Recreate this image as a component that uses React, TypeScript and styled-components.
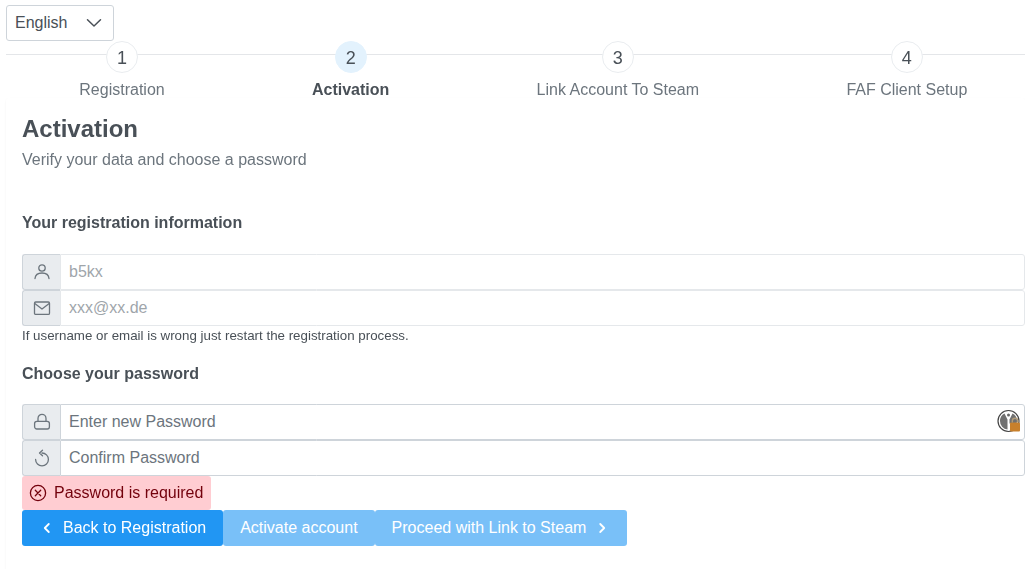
import React from "react";
import styled, { createGlobalStyle } from "styled-components";

const Global = createGlobalStyle`
  html, body { margin: 0; padding: 0; background: #fff; }
  body { font-family: "Liberation Sans", Arial, sans-serif; font-size: 16px; color: #495057; overflow: hidden; }
  * { box-sizing: border-box; }
`;

const Page = styled.div`
  width: 1025px;
  height: 569px;
  padding: 5px 0 0 6px;
  overflow: hidden;
  opacity: 0.999;
`;

const LangSelect = styled.div`
  width: 108px;
  height: 36px;
  border: 1px solid #ced4da;
  border-radius: 3px;
  padding: 0 11px 0 8px;
  display: flex;
  align-items: center;
  justify-content: space-between;
  color: #495057;
  background: #fff;
`;

const Steps = styled.ol`
  position: relative;
  list-style: none;
  margin: 0;
  padding: 0 0 0 73.3px;
  display: flex;
  align-items: flex-start;
  gap: 147.3px;
  height: 57px;
  &::before {
    content: "";
    position: absolute;
    left: 0;
    right: 0;
    top: 13px;
    height: 1px;
    background: #e4e6e9;
  }
`;

const Step = styled.li`
  position: relative;
  display: flex;
  flex-direction: column;
  align-items: center;
  white-space: nowrap;
`;

const StepNumber = styled.span<{ $active?: boolean }>`
  width: 32px;
  height: 32px;
  flex: none;
  border-radius: 50%;
  display: flex;
  align-items: center;
  justify-content: center;
  font-size: 18px;
  line-height: 18px;
  padding-top: 1px;
  color: #495057;
  background: ${(p) => (p.$active ? "#e3f2fd" : "#fff")};
  border: 1px solid ${(p) => (p.$active ? "#e3f2fd" : "#e9ecef")};
`;

const StepLabel = styled.span<{ $active?: boolean }>`
  margin-top: 8px;
  line-height: 18px;
  color: ${(p) => (p.$active ? "#495057" : "#6c757d")};
  font-weight: ${(p) => (p.$active ? 700 : 400)};
`;

const Card = styled.section`
  position: relative;
  height: 480px;
  padding: 16px 0 16px 16px;
  background: #fff;
  border-radius: 3px;
  box-shadow: 0 2px 1px -1px rgba(0, 0, 0, 0.06), 0 1px 1px 0 rgba(0, 0, 0, 0.04), 0 1px 3px 0 rgba(0, 0, 0, 0.06);
`;

const Title = styled.h1`
  margin: 0;
  font-size: 24px;
  line-height: 29px;
  font-weight: 700;
  color: #495057;
`;

const Subtitle = styled.p`
  margin: 8px 0 0;
  line-height: 18px;
  color: #6c757d;
`;

const SectionHeading = styled.h2<{ $top: number; $bottom: number }>`
  margin: ${(p) => p.$top}px 0 ${(p) => p.$bottom}px;
  font-size: 16px;
  line-height: 18px;
  font-weight: 700;
  color: #495057;
`;

const InputRow = styled.div`
  display: flex;
  height: 36px;
`;

const Addon = styled.span`
  width: 38px;
  flex: none;
  display: flex;
  align-items: center;
  justify-content: center;
  background: #e9ecef;
  color: #6c757d;
  border: 1px solid #ced4da;
  border-right: none;
  border-radius: 3px 0 0 3px;
`;

const Field = styled.div<{ $disabled?: boolean }>`
  flex: 1;
  position: relative;
  display: flex;
  align-items: center;
  padding: 0 8px;
  border: 1px solid #ced4da;
  border-radius: 0 3px 3px 0;
  background: #fff;
  color: #6c757d;
  ${(p) => (p.$disabled ? "opacity: 0.65; border-color: #d8dce0;" : "")}
`;

const Hint = styled.small`
  display: block;
  font-size: 13.33px;
  line-height: 15px;
  margin-top: 2px;
  color: #495057;
`;

const ErrorBox = styled.div`
  width: 189px;
  height: 34px;
  display: flex;
  align-items: center;
  gap: 7px;
  padding-left: 7px;
  border-radius: 3px;
  background: #ffcdd2;
  color: #73000c;
`;

const ButtonBar = styled.div`
  display: flex;
`;

const Button = styled.button<{ $disabled?: boolean }>`
  height: 36px;
  display: flex;
  align-items: center;
  gap: 8px;
  border: none;
  border-radius: 3px;
  margin: 0;
  padding: 0 17px;
  font: inherit;
  color: #fff;
  background: #2196f3;
  ${(p) => (p.$disabled ? "opacity: 0.6;" : "")}
`;

const PadlockBadge = styled.span`
  position: absolute;
  right: 3px;
  top: 4px;
  width: 24px;
  height: 24px;
  display: block;
`;

const Ico = ({ children, size = 18, sw = 1.3 }: { children: React.ReactNode; size?: number; sw?: number }) => (
  <svg width={size} height={size} viewBox="0 0 18 18" fill="none" stroke="currentColor" strokeWidth={sw} strokeLinecap="round" strokeLinejoin="round">
    {children}
  </svg>
);

export default function App() {
  return (
    <Page>
      <Global />
      <LangSelect>
        <span>English</span>
        <svg width="16" height="16" viewBox="0 0 16 16" fill="none" stroke="#495057" strokeWidth="1.5" strokeLinecap="round" strokeLinejoin="round">
          <path d="M1.5 4.8 8 11l6.5-6.2" />
        </svg>
      </LangSelect>
      <Steps>
        <Step><StepNumber>1</StepNumber><StepLabel>Registration</StepLabel></Step>
        <Step><StepNumber $active>2</StepNumber><StepLabel $active>Activation</StepLabel></Step>
        <Step><StepNumber>3</StepNumber><StepLabel>Link Account To Steam</StepLabel></Step>
        <Step><StepNumber>4</StepNumber><StepLabel>FAF Client Setup</StepLabel></Step>
      </Steps>
      <Card>
        <Title>Activation</Title>
        <Subtitle>Verify your data and choose a password</Subtitle>
        <SectionHeading $top={45} $bottom={22}>Your registration information</SectionHeading>
        <InputRow>
          <Addon>
            <Ico><circle cx="9" cy="5" r="3.2" /><path d="M2 15.5c.3-3.500 3-5.500 7-5.500s6.700 2 7 5.500" /></Ico>
          </Addon>
          <Field $disabled>b5kx</Field>
        </InputRow>
        <InputRow>
          <Addon>
            <Ico><rect x="1.500" y="3" width="15" height="12.400" rx="1.200" /><path d="M1.800 4.500 9 10l7.200-5.500" /></Ico>
          </Addon>
          <Field $disabled>xxx@xx.de</Field>
        </InputRow>
        <Hint>If username or email is wrong just restart the registration process.</Hint>
        <SectionHeading $top={22} $bottom={21}>Choose your password</SectionHeading>
        <InputRow>
          <Addon>
            <Ico><rect x="1.600" y="8.400" width="14.800" height="7.600" rx="2.200" /><path d="M5 8.400V5.400a4 4 0 0 1 8 0v3" /></Ico>
          </Addon>
          <Field>
            Enter new Password
            <PadlockBadge>
              <svg width="24" height="24" viewBox="0 0 24 24">
                <circle cx="11.500" cy="12" r="10.500" fill="#fff" stroke="#444" strokeWidth="1.200" />
                <path d="M3 12a8.500 8.500 0 0 1 4.500-7.500L10.500 10.500V20.500A8.500 8.500 0 0 1 3 12Z" fill="#707070" />
                <path d="M20 12a8.500 8.500 0 0 0-4.500-7.500L12.500 10.500v4h7a8.500 8.500 0 0 0 .5-2.500Z" fill="#707070" />
                <circle cx="11.500" cy="6" r="1.500" fill="#666" />
                <rect x="13" y="13.500" width="10" height="9" rx="1" fill="#c8802c" />
                <path d="M15.300 13.500v-1.500a2.700 2.700 0 0 1 5.400 0v1.500" fill="none" stroke="#b09a78" strokeWidth="1.400" />
              </svg>
            </PadlockBadge>
          </Field>
        </InputRow>
        <InputRow>
          <Addon>
            <Ico><path d="M9 4a6.400 6.400 0 1 1-6.400 6.400" /><path d="M9.500 1.200 6.500 4l3 2.800" /></Ico>
          </Addon>
          <Field>Confirm Password</Field>
        </InputRow>
        <ErrorBox>
          <Ico><circle cx="9" cy="9" r="7.600" /><path d="M6.300 6.300l5.400 5.400M11.700 6.300l-5.400 5.400" /></Ico>
          <span>Password is required</span>
        </ErrorBox>
        <ButtonBar>
          <Button>
            <Ico size={16} sw={2}><path d="M11 4.500 6.500 9l4.500 4.500" /></Ico>
            <span>Back to Registration</span>
          </Button>
          <Button $disabled>Activate account</Button>
          <Button $disabled>
            <span>Proceed with Link to Steam</span>
            <Ico size={16} sw={2}><path d="M7 4.500 11.500 9 7 13.500" /></Ico>
          </Button>
        </ButtonBar>
      </Card>
    </Page>
  );
}
